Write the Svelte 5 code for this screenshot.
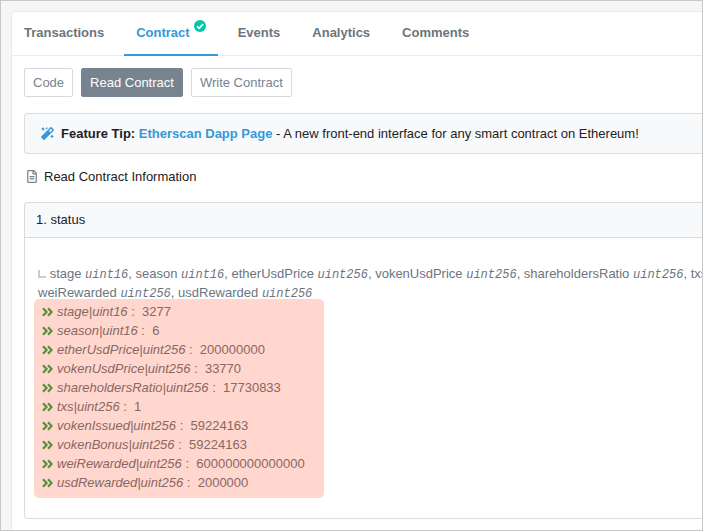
<script>
  const tabs = ['Transactions', 'Contract', 'Events', 'Analytics', 'Comments'];
  const modes = ['Code', 'Read Contract', 'Write Contract'];
  let activeTab = $state('Contract');
  let activeMode = $state('Read Contract');

  const signature = [
    [['stage', 'uint16'], ['season', 'uint16'], ['etherUsdPrice', 'uint256'], ['vokenUsdPrice', 'uint256'], ['shareholdersRatio', 'uint256'], ['txs', '']],
    [['weiRewarded', 'uint256'], ['usdRewarded', 'uint256']]
  ];

  const results = [
    ['stage', 'uint16', '3277'],
    ['season', 'uint16', '6'],
    ['etherUsdPrice', 'uint256', '200000000'],
    ['vokenUsdPrice', 'uint256', '33770'],
    ['shareholdersRatio', 'uint256', '17730833'],
    ['txs', 'uint256', '1'],
    ['vokenIssued', 'uint256', '59224163'],
    ['vokenBonus', 'uint256', '59224163'],
    ['weiRewarded', 'uint256', '600000000000000'],
    ['usdRewarded', 'uint256', '2000000']
  ];
</script>

<div class="frame">
  <main class="card">
    <nav class="tabs">
      {#each tabs as tab}
        <button class="tab" class:active={tab === activeTab} onclick={() => (activeTab = tab)}>
          {tab}
          {#if tab === 'Contract'}
            <svg class="check" viewBox="0 0 12 12" aria-hidden="true">
              <circle cx="6" cy="6" r="6" fill="#00c9a7" />
              <path d="M3 6.2 5.1 8.3 9.1 4.1" fill="none" stroke="#fff" stroke-width="1.6" />
            </svg>
          {/if}
        </button>
      {/each}
    </nav>

    <div class="content">
      <div class="modes">
        {#each modes as mode}
          <button class="mode" class:active={mode === activeMode} onclick={() => (activeMode = mode)}>{mode}</button>
        {/each}
      </div>

      <div class="tip">
        <svg class="wand" viewBox="0 0 512 512" aria-hidden="true">
          <path fill="#3498db" d="M224 96l16-32 32-16-32-16-16-32-16 32-32 16 32 16 16 32zM80 160l26.700-53.300L160 80l-53.300-26.700L80 0 53.300 53.300 0 80l53.300 26.700L80 160zm352 128l-26.700 53.300L352 368l53.300 26.700L432 448l26.700-53.300L512 368l-53.300-26.700L432 288zm70.600-193.800L417.800 9.400C411.500 3.100 403.300 0 395.200 0c-8.200 0-16.400 3.100-22.600 9.400L9.400 372.500c-12.500 12.500-12.500 32.800 0 45.300l84.900 84.900c6.200 6.200 14.400 9.400 22.600 9.400s16.400-3.100 22.600-9.400l363.100-363.200c12.500-12.500 12.500-32.700 0-45.300zM359.400 203.500l-50.900-50.900 86.600-86.600 50.900 50.900-86.600 86.600z" />
        </svg>
        <p><b>Feature Tip: <a href="#dapp">Etherscan Dapp Page</a></b> - A new front-end interface for any smart contract on Ethereum!</p>
      </div>

      <h1>
        <svg class="file" viewBox="0 0 384 512" aria-hidden="true">
          <path fill="#77838f" d="M288 248v28c0 6.600-5.400 12-12 12H108c-6.600 0-12-5.400-12-12v-28c0-6.600 5.400-12 12-12h168c6.600 0 12 5.400 12 12zm-12 72H108c-6.600 0-12 5.400-12 12v28c0 6.600 5.400 12 12 12h168c6.600 0 12-5.400 12-12v-28c0-6.600-5.400-12-12-12zm108-188.100V464c0 26.500-21.500 48-48 48H48c-26.500 0-48-21.500-48-48V48C0 21.500 21.500 0 48 0h204.100C264.800 0 277 5.100 286 14.100L369.900 98c9 8.900 14.100 21.200 14.100 33.900zM256 51.900V128h76.100L256 51.900zM336 464V176H232c-13.300 0-24-10.700-24-24V48H48v416h288z" />
        </svg>
        Read Contract Information
      </h1>

      <section class="method">
        <h2>1. status</h2>
        <div class="body">
          <div class="signature">
            {#each signature as line, l}
              <p>
                {#if l === 0}<svg class="branch" viewBox="0 0 8 8" aria-hidden="true"><path d="M1 0V7H8" fill="none" stroke="#c8ced6" stroke-width="2" /></svg>{/if}
                {#each line as [name, type], i}{i ? ', ' : ''}{name}{#if type}{' '}<i>{type}</i>{/if}{/each}
              </p>
            {/each}
          </div>
          <ul>
            {#each results as [name, type, value]}
              <li>
                <svg class="arrows" viewBox="0 0 11 10" aria-hidden="true">
                  <path d="M1 1.200 4.600 5 1 8.800M6 1.200 9.600 5 6 8.800" fill="none" stroke="#55913a" stroke-width="2.200" />
                </svg>
                <span><em>{name}|{type}</em> : &nbsp;{value}</span>
              </li>
            {/each}
          </ul>
        </div>
      </section>
    </div>
  </main>
</div>

<style>
  .frame {
    box-sizing: border-box;
    height: 100vh;
    overflow: hidden;
    padding: 10px 0 0 10px;
    border: 1px solid #c8c8c8;
    background: #f5f6f8;
    color: #1e2022;
    font: 13px/19px "Liberation Sans", Arial, sans-serif;
  }

  .card {
    min-height: 100%;
    border: 1px solid #e7eaf3;
    border-width: 1px 0 0 1px;
    border-radius: 4px 0 0 0;
    background: #fff;
  }

  button {
    margin: 0;
    font: inherit;
    cursor: pointer;
  }

  p, h1, h2, ul {
    margin: 0;
    padding: 0;
    font: inherit;
  }

  .tabs {
    display: flex;
    gap: 8px;
    height: 43px;
    border-bottom: 1px solid #e7eaf3;
  }

  .tab {
    display: flex;
    align-items: center;
    gap: 4px;
    height: 44px;
    padding: 0 12px 2px;
    border: 0;
    border-bottom: 2px solid transparent;
    background: none;
    color: #6c757d;
    font-weight: bold;
  }

  .tab.active {
    border-color: #3498db;
    color: #3498db;
  }

  .check {
    width: 12px;
    height: 12px;
    margin-bottom: 12px;
  }

  .content {
    padding: 12px 0 12px 12px;
  }

  .modes {
    display: flex;
    gap: 8px;
  }

  .mode {
    height: 29px;
    padding: 0 8px;
    border: 1px solid #d5dae2;
    border-radius: 2px;
    background: #fff;
    color: #77838f;
  }

  .mode.active {
    border-color: #77838f;
    background: #77838f;
    color: #fff;
  }

  .tip {
    display: flex;
    align-items: center;
    gap: 7px;
    margin-top: 16px;
    padding: 10px 0 10px 16px;
    border: 1px solid #d8dde1;
    border-right: 0;
    border-radius: 4px 0 0 4px;
    background: #f8f9fb;
    white-space: nowrap;
  }

  .wand {
    width: 13px;
    height: 13px;
  }

  a {
    color: #3498db;
    text-decoration: none;
  }

  h1 {
    display: flex;
    align-items: center;
    gap: 7px;
    margin: 13px 0 16px;
    padding-left: 3px;
  }

  .file {
    width: 10px;
    height: 13px;
  }

  .method {
    border: 1px solid #d9dbde;
    border-right: 0;
    border-radius: 4px 0 0 4px;
  }

  h2 {
    padding: 7px 11px 8px;
    border-bottom: 1px solid #d9dbde;
    border-radius: 4px 0 0 0;
    background: #f8f9fb;
  }

  .body {
    padding: 26px 0 20px 13px;
  }

  .signature {
    color: #6c757d;
    white-space: nowrap;
  }

  .signature p {
    height: 19px;
  }

  .signature i {
    font-family: "Liberation Mono", monospace;
    font-size: 12px;
  }

  .branch {
    width: 8px;
    height: 8px;
  }

  ul {
    box-sizing: border-box;
    width: 290px;
    margin: -3px 0 0 -4px;
    padding: 3px 8px 6px;
    border-radius: 5px;
    background: #ffd7ce;
    color: #8a6763;
    list-style: none;
  }

  li {
    display: flex;
    align-items: center;
    gap: 4px;
  }

  .arrows {
    width: 11px;
    height: 10px;
  }
</style>
